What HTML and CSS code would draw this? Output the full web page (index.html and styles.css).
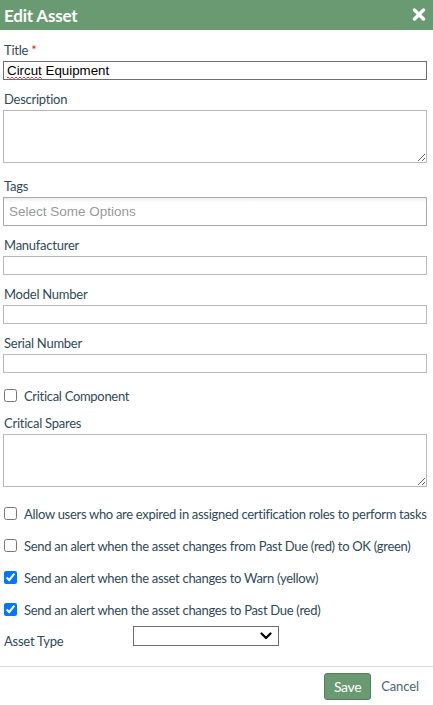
FILE: index.html
```html
<!DOCTYPE html>
<html>
<head>
<meta charset="utf-8">
<link rel="stylesheet" href="styles.css">
</head>
<body>
<div class="dialog">
  <div class="header">
    <span class="header-title">Edit Asset</span>
    <svg class="close" width="14" height="13" viewBox="0 0 14 13"><path d="M2.5 2 L11.5 11 M11.5 2 L2.5 11" stroke="#fff" stroke-width="3.4" stroke-linecap="round"/></svg>
  </div>
  <div class="body">
    <div class="field">
      <label class="lbl">Title <span class="req">*</span></label>
      <div class="title-wrap">
        <input class="input input-dark" type="text" value="Circut Equipment" spellcheck="false">
        <span class="squiggle"></span>
      </div>
    </div>
    <div class="field field-ta">
      <label class="lbl">Description</label>
      <textarea class="textarea"></textarea>
    </div>
    <div class="field">
      <label class="lbl">Tags</label>
      <div class="tags">Select Some Options</div>
    </div>
    <div class="field">
      <label class="lbl">Manufacturer</label>
      <input class="input" type="text">
    </div>
    <div class="field">
      <label class="lbl">Model Number</label>
      <input class="input" type="text">
    </div>
    <div class="field">
      <label class="lbl">Serial Number</label>
      <input class="input" type="text">
    </div>
    <label class="check check-cc"><input type="checkbox"><span>Critical Component</span></label>
    <div class="field field-ta">
      <label class="lbl">Critical Spares</label>
      <textarea class="textarea"></textarea>
    </div>
    <div class="checks">
      <label class="check"><input type="checkbox"><span>Allow users who are expired in assigned certification roles to perform tasks</span></label>
      <label class="check"><input type="checkbox"><span>Send an alert when the asset changes from Past Due (red) to OK (green)</span></label>
      <label class="check"><input type="checkbox" checked><span>Send an alert when the asset changes to Warn (yellow)</span></label>
      <label class="check"><input type="checkbox" checked><span>Send an alert when the asset changes to Past Due (red)</span></label>
    </div>
    <div class="type-row">
      <label class="lbl type-lbl">Asset Type</label>
      <div class="select-wrap">
        <select class="select"><option></option></select>
        <svg class="chev" width="12" height="8" viewBox="0 0 12 8"><path d="M1.5 1.5 L6 6 L10.5 1.5" fill="none" stroke="#000" stroke-width="2.2" stroke-linecap="round" stroke-linejoin="round"/></svg>
      </div>
    </div>
  </div>
  <div class="footer">
    <button class="btn-save">Save</button>
    <span class="cancel">Cancel</span>
  </div>
</div>
</body>
</html>
```

FILE: styles.css
```css
html, body {
  margin: 0;
  padding: 0;
  background: #fff;
}
body {
  font-family: Lato, "Open Sans", sans-serif;
  width: 433px;
  height: 705px;
  overflow: hidden;
}
.header {
  height: 30px;
  background: #6a9a72;
  display: flex;
  align-items: center;
  justify-content: space-between;
  padding: 0 7px 0 4px;
}
.header-title {
  color: #fff;
  font-size: 17px;
  font-weight: bold;
  letter-spacing: -0.2px;
}
.close {
  display: block;
  margin-top: -1px;
}
.body {
  padding: 12px 6px 0 3px;
}
.field {
  margin-bottom: 11px;
}
.field-ta {
  margin-bottom: 15px;
}
.lbl {
  display: block;
  font-size: 13px;
  line-height: 17px;
  color: #2f4a58;
  letter-spacing: -0.25px;
  margin: 0 0 2px 1px;
}
.req {
  color: #e02020;
}
.title-wrap {
  position: relative;
}
.input {
  display: block;
  box-sizing: border-box;
  width: 424px;
  height: 19px;
  margin: 0;
  padding: 0 3px;
  border: 1px solid #b8b8b8;
  border-radius: 0;
  font-family: "Liberation Sans", Arial, sans-serif;
  font-size: 13.333px;
  color: #000;
  outline: none;
}
.input-dark {
  border-color: #6e6e6e;
}
.squiggle {
  position: absolute;
  left: 4px;
  top: 16px;
  width: 35px;
  height: 2px;
  background:
    repeating-linear-gradient(90deg, #e23c3c 0 2px, transparent 2px 4px) 0 0 / 100% 1px no-repeat,
    repeating-linear-gradient(90deg, transparent 0 2px, #f08a8a 2px 4px) 0 1px / 100% 1px no-repeat;
  pointer-events: none;
}
.textarea {
  display: block;
  box-sizing: border-box;
  width: 424px;
  height: 53px;
  margin: 0;
  padding: 2px;
  border: 1px solid #b8b8b8;
  border-radius: 0;
  resize: vertical;
  font-family: "Liberation Sans", Arial, sans-serif;
}
.tags {
  box-sizing: border-box;
  width: 424px;
  height: 29px;
  border: 1px solid #aaa;
  background: linear-gradient(#eee 1%, #fff 15%);
  padding: 0 5px;
  display: flex;
  align-items: center;
  font-family: "Liberation Sans", Arial, sans-serif;
  font-size: 13.5px;
  color: #999;
}
.check {
  display: flex;
  align-items: center;
  font-size: 13px;
  letter-spacing: -0.3px;
  white-space: nowrap;
  color: #2f4a58;
  height: 19px;
}
.check input {
  width: 13px;
  height: 13px;
  margin: 0 7px 0 1px;
  flex: none;
}
.check-cc {
  margin: 13px 0 10px;
}
.checks {
  display: flex;
  flex-direction: column;
  gap: 13px;
  margin-top: 17px;
}
.type-row {
  display: flex;
  align-items: center;
  margin-top: 8px;
  height: 20px;
}
.type-lbl {
  width: 129px;
  margin: 8px 0 0 1px;
}
.select-wrap {
  position: relative;
  margin-top: -3px;
}
.select {
  display: block;
  width: 146px;
  height: 20px;
  box-sizing: border-box;
  border: 1px solid #6e6e6e;
  border-radius: 0;
  background: #fff;
  appearance: none;
  -webkit-appearance: none;
  margin: 0;
}
.chev {
  position: absolute;
  right: 7px;
  top: 6px;
}
.footer {
  margin-top: 19px;
  border-top: 1px solid #dcdcdc;
  height: 38px;
  display: flex;
  align-items: center;
  justify-content: flex-end;
  padding: 0 14px 0 0;
  gap: 10px;
}
.btn-save {
  width: 47px;
  height: 27px;
  margin-top: 1px;
  background: #6a9a72;
  border: 1px solid #557d5c;
  border-radius: 3px;
  color: #fff;
  font-family: Lato, "Open Sans", sans-serif;
  font-size: 14px;
  letter-spacing: -0.3px;
  padding: 0;
}
.cancel {
  font-size: 13px;
  letter-spacing: -0.1px;
  color: #4c6770;
}
```
